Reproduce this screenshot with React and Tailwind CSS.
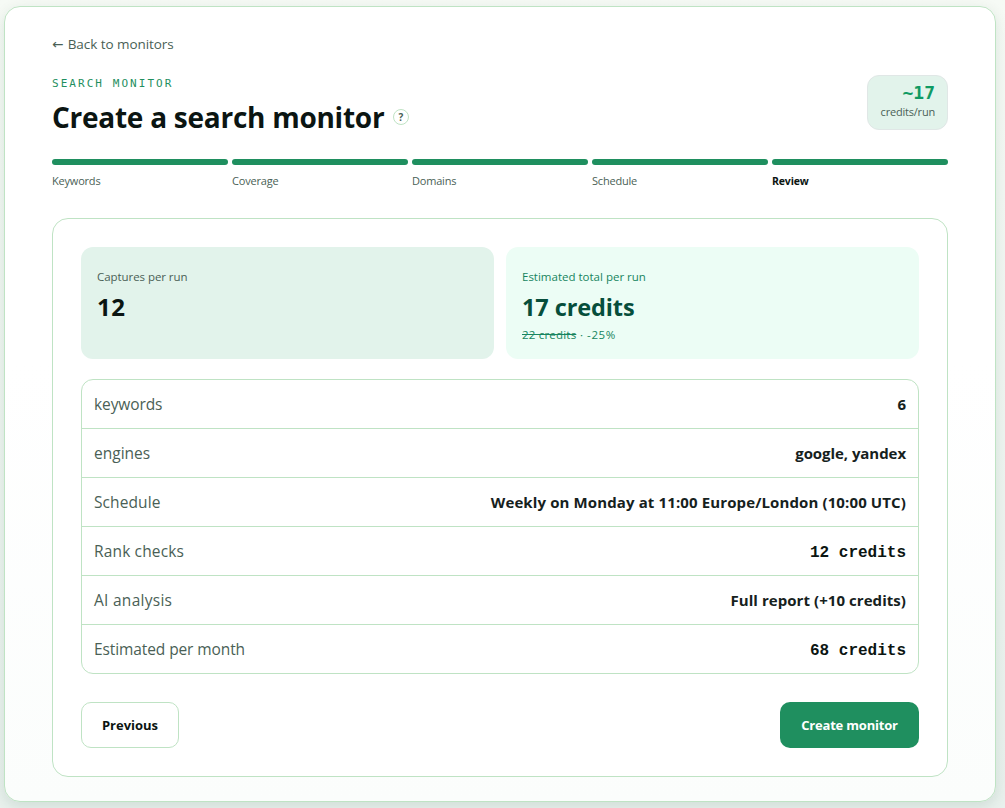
const steps = [
  { name: "Keywords", done: true },
  { name: "Coverage", done: true },
  { name: "Domains", done: true },
  { name: "Schedule", done: true },
  { name: "Review", done: false },
];

const rows = [
  { label: "keywords", value: "6", labelClass: "tracking-[-0.1px]", valueClass: "" },
  { label: "engines", value: "google, yandex", labelClass: "", valueClass: "tracking-[-0.06px]" },
  {
    label: "Schedule",
    value: "Weekly on Monday at 11:00 Europe/London (10:00 UTC)",
    labelClass: "tracking-[0.1px]",
    valueClass: "tracking-[0.12px]",
  },
  { label: "Rank checks", value: "12 credits", labelClass: "tracking-[0.15px]", mono: true },
  { label: "AI analysis", value: "Full report (+10 credits)", labelClass: "tracking-[0.27px]", valueClass: "tracking-[0.06px]" },
  { label: "Estimated per month", value: "68 credits", labelClass: "tracking-[-0.1px]", mono: true },
];

function Header() {
  return (
    <header className="flex items-start justify-between">
      <div>
        <p className="pt-px font-['DejaVu_Sans_Mono',monospace] text-[11px] leading-[15px] tracking-[2.05px] text-[#1f8f5f]">
          SEARCH MONITOR
        </p>
        <div className="mt-2 flex items-center gap-[9px]">
          <h1 className="w-[332px] text-[28px] leading-9 font-bold tracking-[-0.26px] whitespace-nowrap text-[#0b1512]">
            Create a search monitor
          </h1>
          <span className="flex size-4 items-center justify-center rounded-full border border-[#bfe3c4] text-[10px] leading-none font-bold text-[#4a5f56]">
            ?
          </span>
        </div>
      </div>
      <div className="flex h-[55px] w-[81px] flex-col items-end rounded-xl border border-[#e0e7e6] bg-[#e2f3eb] pt-1 pr-3">
        <span className="font-['DejaVu_Sans_Mono',monospace] text-lg leading-[26px] font-bold text-[#109a63]">
          ~17
        </span>
        <span className="-mt-px text-[11px] leading-[13px] tracking-[-0.2px] text-[#4a5f56]">
          credits/run
        </span>
      </div>
    </header>
  );
}

function Progress() {
  return (
    <ol className="mt-6 grid grid-cols-5 gap-1">
      {steps.map((step) => (
        <li key={step.name}>
          <div className="h-1.5 rounded-full bg-[#1f8f5f]" />
          <p
            className={
              step.done
                ? "mt-2 text-[11px] leading-4 tracking-[-0.2px] text-[#4a5f56]"
                : "mt-2 text-[10.5px] leading-4 font-bold tracking-[-0.15px] text-[#0b1512]"
            }
          >
            {step.name}
          </p>
        </li>
      ))}
    </ol>
  );
}

function Stats() {
  return (
    <div className="grid h-28 grid-cols-2 gap-3">
      <div className="rounded-xl bg-[#e2f3eb] px-4 pt-[22px]">
        <p className="text-[11.5px] leading-4 tracking-[-0.06px] text-[#4a5f56]">Captures per run</p>
        <p className="mt-1.5 text-2xl leading-8 font-bold tracking-[0.5px] text-[#0b1512]">12</p>
      </div>
      <div className="rounded-xl bg-[#ecfdf5] px-4 pt-[22px]">
        <p className="text-[11.5px] leading-4 text-[#178560]">Estimated total per run</p>
        <p className="mt-1.5 text-[23.5px] leading-8 font-bold tracking-[-0.1px] text-[#064e3b]">
          17 credits
        </p>
        <p className="mt-1 text-[11.5px] leading-4 text-[#178560]">
          <span className="tracking-[0.2px] line-through">22 credits</span>
          <span className="tracking-[0.6px]"> · -25%</span>
        </p>
      </div>
    </div>
  );
}

export default function App() {
  return (
    <main className="h-[808px] overflow-hidden bg-linear-to-b from-[#f6faf5] to-[#e9f1ed] pt-1.5 pr-[9px] pl-1 font-['Open_Sans','DejaVu_Sans',sans-serif]">
      <div className="h-[796px] rounded-2xl border border-[#bfe3c4] bg-linear-to-b from-white from-45% to-[#fbfdfc] px-[47px] pt-[27px] shadow-[0_4px_14px_rgba(20,70,50,0.12)]">
        <a href="#" className="block text-[13.5px] leading-5 tracking-[-0.06px] text-[#4a5f56]">
          <span className="mr-px">←</span> Back to monitors
        </a>
        <div className="mt-[21px]">
          <Header />
        </div>
        <Progress />
        <section className="mt-[29px] h-[559px] rounded-2xl border border-[#bfe3c4] bg-white p-7">
          <Stats />
          <dl className="mt-5 divide-y divide-[#bfe3c4] rounded-xl border border-[#bfe3c4]">
            {rows.map((row) => (
              <div key={row.label} className="flex h-[49px] items-center justify-between px-3 last:h-12">
                <dt className={`pt-0.5 text-[15.5px] text-[#4a5f56] ${row.labelClass}`}>{row.label}</dt>
                {row.mono ? (
                  <dd className="pt-[3px] font-['Liberation_Mono',monospace] text-base font-bold text-[#0b1512]">
                    {row.value}
                  </dd>
                ) : (
                  <dd className={`text-[15px] font-bold text-[#16211d] ${row.valueClass}`}>{row.value}</dd>
                )}
              </div>
            ))}
          </dl>
          <div className="mt-7 flex justify-between">
            <button className="h-[46px] w-[98px] rounded-[10px] border border-[#bfe3c4] pt-0.5 text-[13px] font-bold text-[#0b1512]">
              Previous
            </button>
            <button className="h-[46px] w-[139px] rounded-[10px] bg-[#1f8f5f] pt-0.5 text-[13px] font-bold tracking-[-0.2px] text-white">
              Create monitor
            </button>
          </div>
        </section>
      </div>
    </main>
  );
}
